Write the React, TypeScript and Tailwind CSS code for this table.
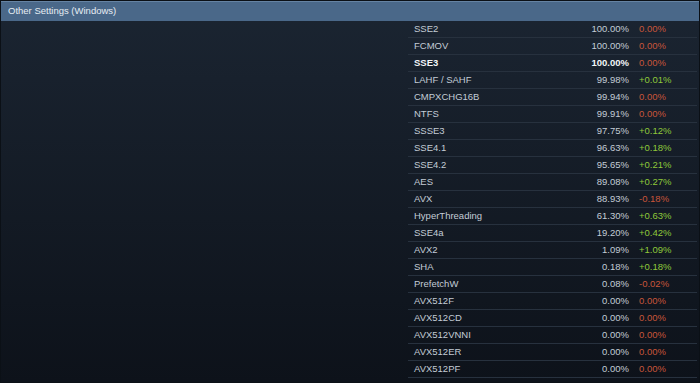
const rows: { name: string; pct: string; change: string; bold?: boolean }[] = [
  { name: "SSE2", pct: "100.00%", change: "0.00%" },
  { name: "FCMOV", pct: "100.00%", change: "0.00%" },
  { name: "SSE3", pct: "100.00%", change: "0.00%", bold: true },
  { name: "LAHF / SAHF", pct: "99.98%", change: "+0.01%" },
  { name: "CMPXCHG16B", pct: "99.94%", change: "0.00%" },
  { name: "NTFS", pct: "99.91%", change: "0.00%" },
  { name: "SSSE3", pct: "97.75%", change: "+0.12%" },
  { name: "SSE4.1", pct: "96.63%", change: "+0.18%" },
  { name: "SSE4.2", pct: "95.65%", change: "+0.21%" },
  { name: "AES", pct: "89.08%", change: "+0.27%" },
  { name: "AVX", pct: "88.93%", change: "-0.18%" },
  { name: "HyperThreading", pct: "61.30%", change: "+0.63%" },
  { name: "SSE4a", pct: "19.20%", change: "+0.42%" },
  { name: "AVX2", pct: "1.09%", change: "+1.09%" },
  { name: "SHA", pct: "0.18%", change: "+0.18%" },
  { name: "PrefetchW", pct: "0.08%", change: "-0.02%" },
  { name: "AVX512F", pct: "0.00%", change: "0.00%" },
  { name: "AVX512CD", pct: "0.00%", change: "0.00%" },
  { name: "AVX512VNNI", pct: "0.00%", change: "0.00%" },
  { name: "AVX512ER", pct: "0.00%", change: "0.00%" },
  { name: "AVX512PF", pct: "0.00%", change: "0.00%" },
];

export default function App() {
  return (
    <div className="flex h-[383px] w-[700px] flex-col overflow-hidden border border-[#0b1016] bg-gradient-to-b from-[#1b2532] to-[#0d121a] font-['Liberation_Sans',Arial,sans-serif] text-[9.5px]">
      <div className="h-[20px] border-t border-[#6583a3] bg-[#4a6889] pl-[7px] leading-[18px] text-[#e6edf3]">
        Other Settings (Windows)
      </div>
      <div className="flex flex-1">
        <div className="w-[407px]" />
        <div className="w-[289px]">
          {rows.map((r) => {
            const up = r.change.startsWith("+");
            return (
              <div
                key={r.name}
                className={`flex h-[17px] items-center border-b border-[#27313e] ${r.bold ? "font-bold text-[#f2f5f8]" : "text-[#c3ccd6]"}`}
              >
                <span className="flex-1 pl-[6px]">{r.name}</span>
                <span className="text-right">{r.pct}</span>
                <span className={`w-[68px] pl-[10px] font-normal ${up ? "text-[#8fc83a]" : "text-[#c8553a]"}`}>
                  {r.change}
                </span>
              </div>
            );
          })}
        </div>
      </div>
    </div>
  );
}
